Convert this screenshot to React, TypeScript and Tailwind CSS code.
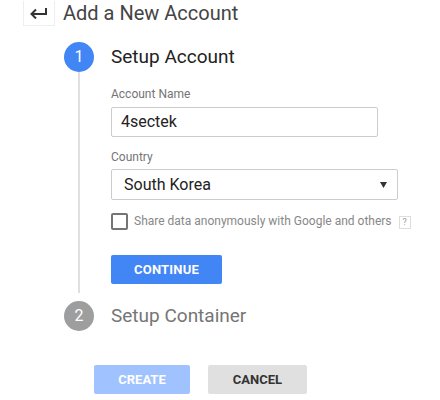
import React from "react";

export default function App() {
  return (
    <div className="w-[440px] h-[400px] bg-white font-['Roboto',sans-serif] text-[#444] overflow-hidden">
      <header className="flex items-center h-[26px]">
        <div className="ml-[23px] w-[32px] h-[25px] border border-[#eee] border-t-0 flex items-center justify-center">
          <svg width="20" height="12" viewBox="0 0 20 12" fill="none" stroke="#333" strokeWidth="2">
            <path d="M17 1v6H3" />
            <path d="M7 2.5L2.5 7L7 11.5" />
          </svg>
        </div>
        <h1 className="ml-[8px] text-[20px] leading-[26px] text-[#444]">Add a New Account</h1>
      </header>

      <div className="pl-[64px]">
        <div className="flex items-center h-[30px] mt-[16px]">
          <div className="w-[30px] h-[30px] rounded-full bg-[#4285f4] text-white text-[16px] flex items-center justify-center">
            1
          </div>
          <span className="ml-[17px] text-[19px] text-[#222]">Setup Account</span>
        </div>

        <div className="ml-[14px] border-l-2 border-[#e0e0e0] pl-[31px] pt-[14px] pb-[9px]">
          <label className="block text-[12px] leading-[16px] text-[#757575]">Account Name</label>
          <div className="mt-[5px] w-[267px] h-[30px] border border-[#ccc] rounded-[2px] flex items-center px-[9px] text-[16px] text-[#222]">
            4sectek
          </div>

          <label className="block mt-[12px] text-[12px] leading-[16px] text-[#757575]">Country</label>
          <div className="mt-[4px] w-[287px] h-[31px] border border-[#ccc] rounded-[2px] flex items-center justify-between pl-[12px] pr-[10px] text-[16px] text-[#222]">
            <span>South Korea</span>
            <svg width="7" height="6" viewBox="0 0 7 6">
              <path d="M0 0h7L3.5 6z" fill="#333" />
            </svg>
          </div>

          <div className="mt-[12px] flex items-center h-[18px]">
            <div className="w-[17px] h-[17px] border-2 border-[#757575] rounded-[2px]" />
            <span className="ml-[6px] text-[12px] text-[#888]">Share data anonymously with Google and others</span>
            <span className="ml-[7px] mt-[3px] w-[12px] h-[13px] border border-[#ddd] text-[9px] leading-[11px] text-[#999] flex items-center justify-center">
              ?
            </span>
          </div>

          <button className="mt-[25px] w-[111px] h-[29px] bg-[#4285f4] rounded-[2px] text-white text-[13px] font-bold tracking-[0.2px]">
            CONTINUE
          </button>
        </div>

        <div className="flex items-center h-[30px] mt-[8px]">
          <div className="w-[30px] h-[30px] rounded-full bg-[#9e9e9e] text-white text-[16px] flex items-center justify-center">
            2
          </div>
          <span className="ml-[17px] text-[19px] text-[#757575]">Setup Container</span>
        </div>

        <div className="flex mt-[34px] ml-[30px] gap-[18px]">
          <button className="w-[96px] h-[29px] bg-[#a0c3ff] rounded-[2px] text-white text-[13px] font-bold">
            CREATE
          </button>
          <button className="w-[99px] h-[29px] bg-[#e0e0e0] rounded-[2px] text-[#333] text-[13px] font-bold">
            CANCEL
          </button>
        </div>
      </div>
    </div>
  );
}
